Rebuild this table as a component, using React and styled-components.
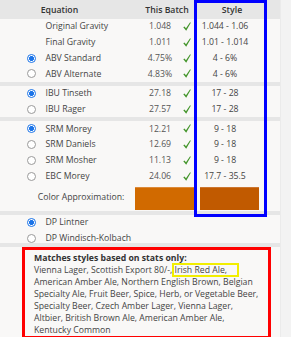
import React from "react";
import styled, { createGlobalStyle } from "styled-components";

const Global = createGlobalStyle`
  html, body { margin: 0; padding: 0; background: #f9f8f7; }
  body { font-family: "Open Sans", "Liberation Sans", sans-serif; }
`;

const Page = styled.div`
  display: flex;
  width: 291px;
  height: 337px;
  overflow: hidden;
`;

const Main = styled.div`
  position: relative;
  flex: none;
  width: 280px;
  background: #f9f8f7;
  font-size: 8.7px;
  color: #444;
`;

const Gutter = styled.div`
  flex: 1;
  background: #f3f3f3;
  border-left: 1px solid #ebebeb;
`;

const COLS = "45.5px 94.5px 40px 14px 73px 13px";

const Header = styled.div`
  display: grid;
  grid-template-columns: ${COLS};
  height: 19px;
  align-items: center;
  background: #e6e6e6;
  color: #333;
  font-weight: 600;
`;

const HeadCell = styled.div`
  grid-column: ${(p) => p.$span};
  text-align: ${(p) => p.$align || "left"};
  padding-left: ${(p) => p.$pl || 0}px;
`;

const Row = styled.div`
  display: grid;
  grid-template-columns: ${COLS};
  height: 15.7px;
  align-items: center;
  line-height: 1;
`;

/* the diastatic-power group is a little tighter than the others */
const CompactGroup = styled.div`
  height: 28px;
`;

const Radio = styled.span`
  box-sizing: border-box;
  width: 9px;
  height: 9px;
  margin-left: 27.2px;
  border-radius: 50%;
  border: 1px solid ${(p) => (p.$on ? "#1a73e8" : "#9a9a9a")};
  background: ${(p) =>
    p.$on
      ? "radial-gradient(circle, #1a73e8 0 2.2px, #ffffff 2.6px)"
      : "#ffffff"};
`;

const Label = styled.span`
  grid-column: 2;
  color: #444;
  white-space: nowrap;
`;

const Batch = styled.span`
  text-align: center;
  color: #555;
`;

const Tick = styled.svg`
  margin-left: 2.7px;
  width: 8px;
  height: 9px;
`;

const Range = styled.span`
  text-align: center;
  padding-right: 11px;
  color: #444;
  white-space: nowrap;
`;

const Divider = styled.div`
  height: 4px;
  background: #e6e6e6;
`;

const ColorRow = styled.div`
  display: grid;
  grid-template-columns: 135px 59px 6px 59px;
  height: 27px;
  align-items: center;
`;

const ColorLabel = styled.span`
  text-align: right;
  padding-right: 10.7px;
  color: #444;
  white-space: nowrap;
`;

const Swatch = styled.div`
  grid-column: ${(p) => p.$col};
  height: 23px;
  margin-top: 2px;
  background: ${(p) => p.$color};
  border-top: 1px solid ${(p) => p.$edge};
  box-sizing: border-box;
`;

const Matches = styled.div`
  margin: 0 9px 0 22px;
  border: 3px solid #ff0000;
  padding: 1.7px 8px 0 9px;
  line-height: 12px;
  color: #444;
`;

const MatchTitle = styled.div`
  font-weight: 700;
  color: #333;
`;

const Marked = styled.span`
  position: relative;
  &::after {
    content: "";
    position: absolute;
    left: -3px;
    right: -12px;
    top: -1px;
    bottom: -1px;
    border: 2px solid #f2ee00;
  }
`;

const ColumnMark = styled.div`
  position: absolute;
  left: 194px;
  top: 0;
  width: 73px;
  height: 217px;
  box-sizing: border-box;
  border: 3px solid #0000ff;
  pointer-events: none;
`;

const Check = () => (
  <Tick viewBox="0 0 8 9">
    <path
      d="M0.3 5.2 L1.4 4.4 L3 6.2 L7.1 0.2 L7.8 0.8 L3.2 8.7 Z"
      fill="#43952b"
    />
  </Tick>
);

const groups = [
  [
    { label: "Original Gravity", value: "1.048", range: "1.044 - 1.06" },
    { label: "Final Gravity", value: "1.011", range: "1.01 - 1.014" },
    { label: "ABV Standard", value: "4.75%", range: "4 - 6%", radio: true, on: true },
    { label: "ABV Alternate", value: "4.83%", range: "4 - 6%", radio: true },
  ],
  [
    { label: "IBU Tinseth", value: "27.18", range: "17 - 28", radio: true, on: true },
    { label: "IBU Rager", value: "27.57", range: "17 - 28", radio: true },
  ],
  [
    { label: "SRM Morey", value: "12.21", range: "9 - 18", radio: true, on: true },
    { label: "SRM Daniels", value: "12.69", range: "9 - 18", radio: true },
    { label: "SRM Mosher", value: "11.13", range: "9 - 18", radio: true },
    { label: "EBC Morey", value: "24.06", range: "17.7 - 35.5", radio: true },
  ],
];

const diastatic = [
  { label: "DP Lintner", on: true },
  { label: "DP Windisch-Kolbach" },
];

const StatRow = ({ row }) => (
  <Row>
    {row.radio ? <Radio $on={row.on} /> : <span />}
    <Label>{row.label}</Label>
    <Batch>{row.value}</Batch>
    <Check />
    <Range>{row.range}</Range>
  </Row>
);

export default function App() {
  return (
    <>
      <Global />
      <Page>
        <Main>
          <Header>
            <HeadCell $span="1 / 3" $pl={40.7}>Equation</HeadCell>
            <HeadCell $span="3 / 5" $align="center">This Batch</HeadCell>
            <HeadCell $span="5" $align="center" $pl={3}>Style</HeadCell>
          </Header>

          {groups.map((g, i) => (
            <React.Fragment key={i}>
              {i > 0 && <Divider />}
              {g.map((row) => (
                <StatRow key={row.label} row={row} />
              ))}
            </React.Fragment>
          ))}

          <ColorRow>
            <ColorLabel>Color Approximation:</ColorLabel>
            <Swatch $col="2" $color="#d16a00" $edge="#dc8a3a" />
            <Swatch $col="4" $color="#c15a00" $edge="#cc7630" />
          </ColorRow>
          <Divider />

          <CompactGroup>
            {diastatic.map((d) => (
              <Row key={d.label}>
                <Radio $on={d.on} />
                <Label>{d.label}</Label>
              </Row>
            ))}
          </CompactGroup>
          <Divider />

          <Matches>
            <MatchTitle>Matches styles based on stats only:</MatchTitle>
            Vienna Lager, Scottish Export 80/-, <Marked>Irish Red Ale,</Marked>{" "}
            American Amber Ale, Northern English Brown, Belgian Specialty Ale,
            Fruit Beer, Spice, Herb, or Vegetable Beer, Specialty Beer, Czech
            Amber Lager, Vienna Lager, Altbier, British Brown Ale, American
            Amber Ale, Kentucky Common
          </Matches>

          <ColumnMark />
        </Main>
        <Gutter />
      </Page>
    </>
  );
}
